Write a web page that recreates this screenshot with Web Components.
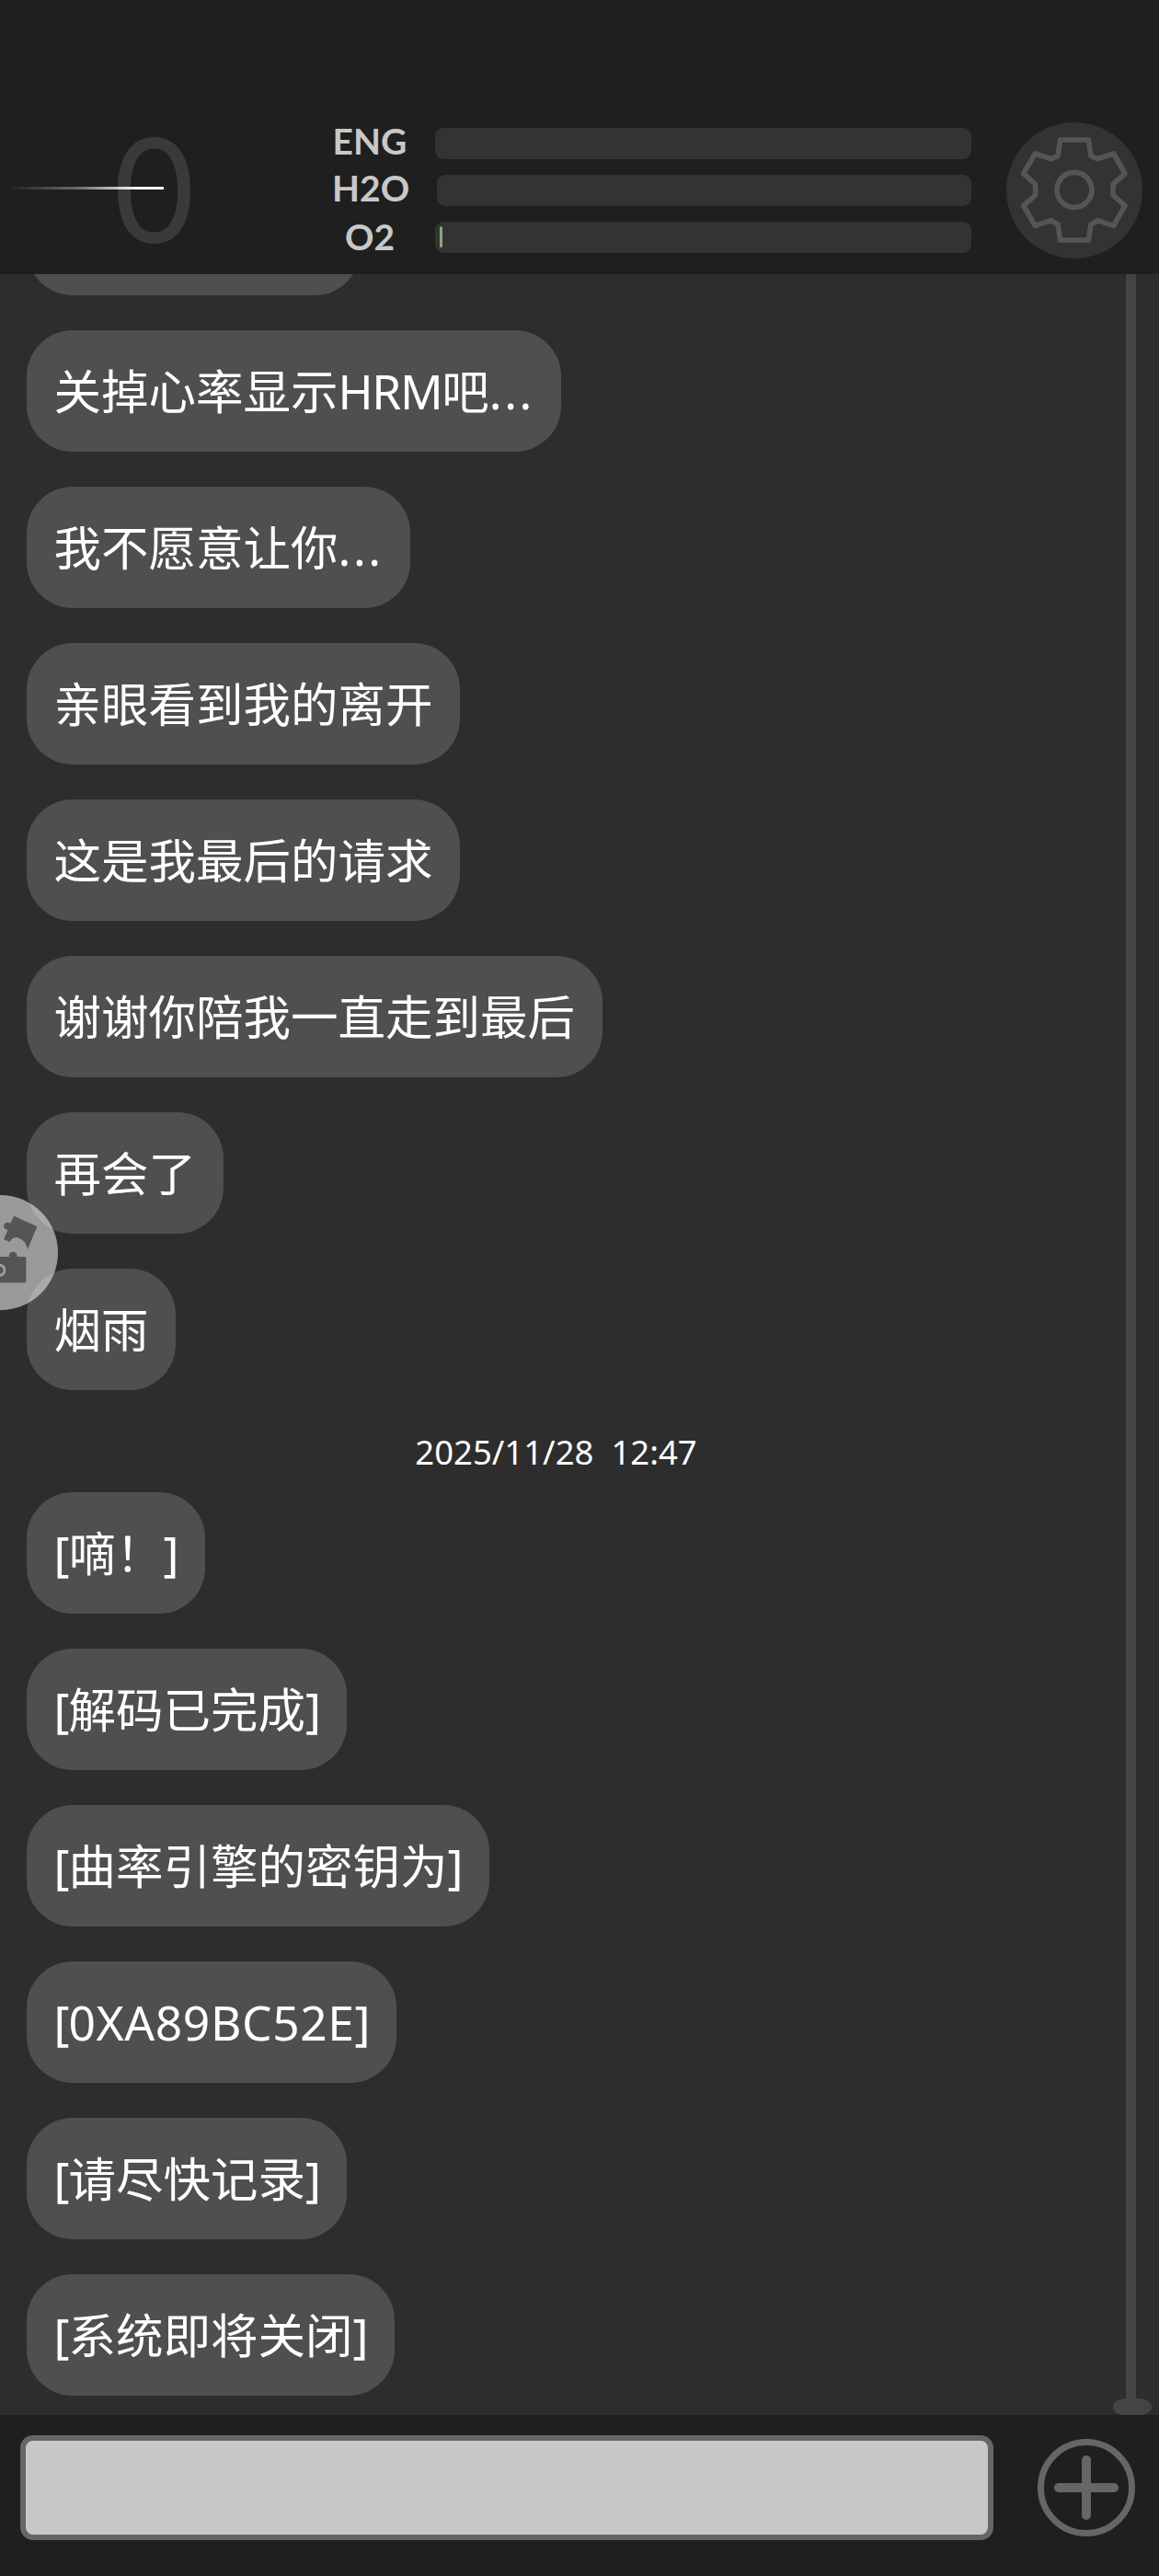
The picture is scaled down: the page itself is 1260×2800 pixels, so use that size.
<!DOCTYPE html>
<html lang="zh">
<head>
<meta charset="utf-8">
<title>Chat</title>
<style>
    html, body { margin: 0; background: #2d2d2d; }
    body { font-family: "Noto Sans", "Noto Sans CJK SC", sans-serif; color: #fff; }
    .dots { letter-spacing: .05em; }
    .code { letter-spacing: .6px; }
    .hrm { letter-spacing: -1.4px; }
    .br { letter-spacing: -1px; }
</style>
</head>
<body>
<chat-app>
    <status-header slot="header"></status-header>

    <chat-bubble slot="list" style="width:363px"></chat-bubble>
    <chat-bubble slot="list">关掉心率显示<span class="hrm">HRM</span>吧<span class="dots">...</span></chat-bubble>
    <chat-bubble slot="list">我不愿意让你<span class="dots">...</span></chat-bubble>
    <chat-bubble slot="list">亲眼看到我的离开</chat-bubble>
    <chat-bubble slot="list">这是我最后的请求</chat-bubble>
    <chat-bubble slot="list">谢谢你陪我一直走到最后</chat-bubble>
    <chat-bubble slot="list">再会了</chat-bubble>
    <chat-bubble slot="list">烟雨</chat-bubble>
    <chat-time slot="list">2025/11/28&nbsp;&nbsp;12:47</chat-time>
    <chat-bubble slot="list"><span class="br">[</span>嘀！<span class="br">]</span></chat-bubble>
    <chat-bubble slot="list"><span class="br">[</span>解码已完成<span class="br">]</span></chat-bubble>
    <chat-bubble slot="list"><span class="br">[</span>曲率引擎的密钥为<span class="br">]</span></chat-bubble>
    <chat-bubble slot="list"><span class="br">[</span><span class="code">0XA89BC52E</span><span class="br">]</span></chat-bubble>
    <chat-bubble slot="list"><span class="br">[</span>请尽快记录<span class="br">]</span></chat-bubble>
    <chat-bubble slot="list"><span class="br">[</span>系统即将关闭<span class="br">]</span></chat-bubble>

    <chat-scrollbar slot="overlay"></chat-scrollbar>
    <puzzle-button slot="overlay"></puzzle-button>

    <input-bar slot="footer"></input-bar>
</chat-app>

<script>
class ChatApp extends HTMLElement {
    constructor() {
        super();
        this.attachShadow({ mode: 'open' });
        this.shadowRoot.innerHTML = `
            <style>
                :host { display: flex; flex-direction: column; height: 2800px; overflow: hidden; background: #2d2d2d; }
                .chat { flex: 1; min-height: 0; position: relative; overflow: hidden; }
                .list { display: flex; flex-direction: column; align-items: flex-start; gap: 38px; width: 1209px; margin-top: -109px; }
            </style>
            <slot name="header"></slot>
            <div class="chat">
                <div class="list"><slot name="list"></slot></div>
                <slot name="overlay"></slot>
            </div>
            <slot name="footer"></slot>`;
    }
}

class StatusHeader extends HTMLElement {
    constructor() {
        super();
        this.attachShadow({ mode: 'open' });
        this.shadowRoot.innerHTML = `
            <style>
                :host { display: flex; align-items: center; flex: none; box-sizing: border-box; height: 298px; padding: 115px 18px 0 0; background: #1f1f1f; position: relative; z-index: 2; }
                .gauge { position: relative; align-self: stretch; width: 361px; flex: none; box-sizing: border-box; padding-right: 26px; display: flex; align-items: center; justify-content: center; }
                .zero { font: 400 154px/1 Inter, sans-serif; color: #3a3a3a; }
                .needle { position: absolute; left: 9px; width: 169px; top: calc(50% - 4px); height: 3px; background: linear-gradient(90deg, rgba(255,255,255,0), rgba(255,255,255,.35) 45%, #fff 85%); }
                .stats { flex: 1; display: flex; flex-direction: column; gap: 17px; }
                .gear { flex: none; width: 148px; height: 148px; margin-left: 38px; border-radius: 50%; background: #333; }
                svg { display: block; width: 100%; height: 100%; }
            </style>
            <div class="gauge"><span class="zero">0</span><div class="needle"></div></div>
            <div class="stats">
                <stat-row label="ENG"></stat-row>
                <stat-row label="H2O"></stat-row>
                <stat-row label="O2" fill></stat-row>
            </div>
            <div class="gear">
                <svg viewBox="102 38 444 444" fill="none" stroke="#555" stroke-width="17" stroke-linejoin="round">
                    <path d="M278 95 L370 95 L378 148 L400 157 L452 140 L489 205 L450 240 L450 275 L489 310 L452 375 L400 358 L378 370 L370 422 L278 422 L270 370 L248 358 L196 375 L158 310 L197 275 L197 240 L158 205 L196 140 L248 157 L270 148 Z"/>
                    <circle cx="324" cy="258" r="57"/>
                </svg>
            </div>`;
    }
}

class StatRow extends HTMLElement {
    constructor() {
        super();
        this.attachShadow({ mode: 'open' });
    }

    connectedCallback() {
        const fill = this.hasAttribute('fill') ? '<i></i>' : '';
        this.shadowRoot.innerHTML = `
            <style>
                :host { display: flex; align-items: center; gap: 30px; height: 34px; }
                b { min-width: 82px; padding-bottom: 6px; text-align: center; font: 700 39px/34px Lato, sans-serif; color: #c8c8c8; }
                :host([fill]) b { padding-bottom: 2px; }
                .bar { flex: 1; height: 34px; border-radius: 9px; background: #333; display: flex; align-items: center; padding-left: 5px; box-sizing: border-box; }
                i { display: block; width: 3px; height: 23px; border-radius: 2px; background: #87a87c; }
            </style>
            <b>${this.getAttribute('label')}</b>
            <div class="bar">${fill}</div>`;
    }
}

class ChatBubble extends HTMLElement {
    constructor() {
        super();
        this.attachShadow({ mode: 'open' });
        this.shadowRoot.innerHTML = `
            <style>
                :host { display: block; box-sizing: border-box; height: 132px; margin-left: 29px; padding: 0 29.5px; border-radius: 50px; background: #4f4f4f; color: #fff; font: 400 51.5px/132px "Noto Sans", "Noto Sans CJK SC", sans-serif; white-space: nowrap; }
            </style>
            <slot></slot>`;
    }
}

class ChatTime extends HTMLElement {
    constructor() {
        super();
        this.attachShadow({ mode: 'open' });
        this.shadowRoot.innerHTML = `
            <style>
                :host { display: block; align-self: stretch; height: 35px; margin: 12px 0 -12px; text-align: center; color: #fff; font: 400 36.5px/35px "Noto Sans", "Noto Sans CJK SC", sans-serif; }
            </style>
            <slot></slot>`;
    }
}

class ChatScrollbar extends HTMLElement {
    constructor() {
        super();
        this.attachShadow({ mode: 'open' });
        this.shadowRoot.innerHTML = `
            <style>
                :host { position: absolute; top: 0; bottom: 0; left: 1210px; width: 42px; display: flex; flex-direction: column; align-items: center; }
                .track { flex: 1; width: 11px; margin-left: -3px; background: #444; }
                .foot { width: 42px; height: 18px; border-radius: 14px 14px 12px 12px / 9px; background: #444; }
            </style>
            <div class="track"></div>
            <div class="foot"></div>`;
    }
}

class PuzzleButton extends HTMLElement {
    constructor() {
        super();
        this.attachShadow({ mode: 'open' });
        this.shadowRoot.innerHTML = `
            <style>
                :host { position: absolute; left: -62px; top: 1001px; width: 125px; height: 125px; border-radius: 50%; background: rgba(255,255,255,.52); }
                svg { display: block; width: 100%; height: 100%; }
            </style>
            <svg viewBox="-186 27 375 375">
                <path fill="#555" d="M46 95 L121 130 L90 204 Q86 178 62 167 Q42 160 32 180 L12 171 L26 140 A12 12 0 1 1 33 120 Z"/>
                <path fill="#555" d="M-60 228 L30 228 A13 13 0 1 1 55 228 L81 228 Q85 228 85 232 L85 309 Q85 313 81 313 L-60 313 Z"/>
                <circle cx="-2" cy="272" r="17" fill="none" stroke="#a2a2a2" stroke-width="8"/>
            </svg>`;
    }
}

class InputBar extends HTMLElement {
    constructor() {
        super();
        this.attachShadow({ mode: 'open' });
        this.shadowRoot.innerHTML = `
            <style>
                :host { display: flex; align-items: center; flex: none; box-sizing: border-box; height: 175px; padding: 0 0 17px 22px; background: #1f1f1f; position: relative; z-index: 2; }
                input { display: block; box-sizing: border-box; width: 1058px; height: 114px; margin: 0; padding: 0 12px; border: 6px solid #666; border-radius: 14px; background: #c8c8c8; outline: none; }
                .add { flex: none; width: 106px; height: 106px; margin-left: 48px; }
                svg { display: block; width: 100%; height: 100%; }
            </style>
            <input type="text" aria-label="message">
            <div class="add">
                <svg viewBox="0 0 106 106" fill="none" stroke="#666" stroke-linecap="round">
                    <circle cx="53" cy="53" r="49.5" stroke-width="7"/>
                    <path d="M53 23 V83 M23 53 H83" stroke-width="10"/>
                </svg>
            </div>`;
    }
}

customElements.define('chat-app', ChatApp);
customElements.define('status-header', StatusHeader);
customElements.define('stat-row', StatRow);
customElements.define('chat-bubble', ChatBubble);
customElements.define('chat-time', ChatTime);
customElements.define('chat-scrollbar', ChatScrollbar);
customElements.define('puzzle-button', PuzzleButton);
customElements.define('input-bar', InputBar);
</script>
</body>
</html>
